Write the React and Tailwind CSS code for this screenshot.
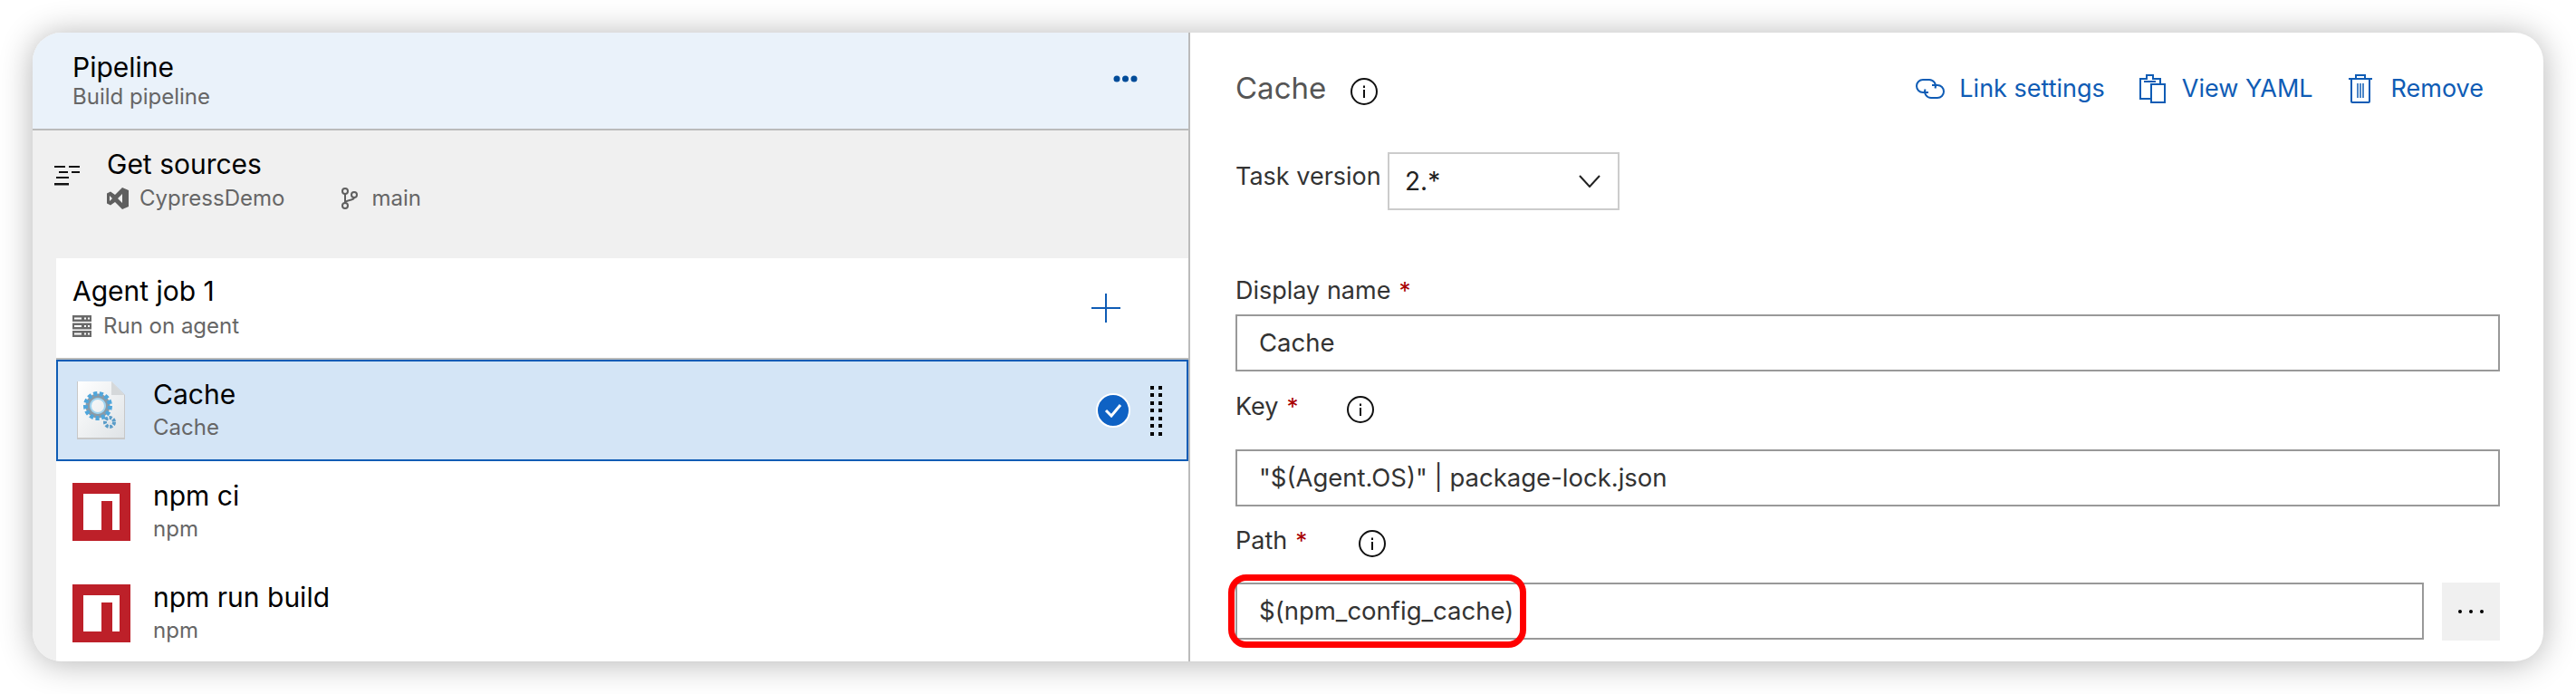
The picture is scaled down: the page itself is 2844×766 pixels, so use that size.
const FONT = "font-['Inter','Noto_Sans',sans-serif]"

function InfoIcon({ className = '' }) {
  return (
    <svg width="30" height="30" viewBox="0 0 30 30" className={className} fill="none">
      <circle cx="15" cy="15" r="14" stroke="#111" strokeWidth="2" />
      <rect x="14" y="13" width="2" height="9" fill="#111" />
      <rect x="14" y="8.5" width="2" height="2.5" fill="#111" />
    </svg>
  )
}

function TasksIcon() {
  return (
    <svg width="28" height="22" viewBox="0 0 28 22" fill="#111">
      <rect x="0" y="0" width="12" height="2" />
      <rect x="16" y="0" width="12" height="2" />
      <rect x="5" y="6" width="10" height="2" />
      <rect x="19" y="6" width="9" height="2" />
      <rect x="2" y="12" width="14" height="2" />
      <rect x="0" y="19" width="16" height="2.5" />
    </svg>
  )
}

function VsIcon() {
  return (
    <svg width="24" height="24" viewBox="0 0 24 24" fill="#5f5f5f">
      <path d="M17 0 24 3v18l-7 3-8-8-5 3.5L0 17.5v-11L4 4.5 9 8zM3 9v6l3-3zm14-2-5 5 5 5z" />
    </svg>
  )
}

function BranchIcon() {
  return (
    <svg width="20" height="24" viewBox="0 0 20 24" fill="none" stroke="#5f5f5f" strokeWidth="2">
      <circle cx="5" cy="4" r="3" />
      <circle cx="5" cy="20" r="3" />
      <circle cx="15" cy="8" r="3" />
      <path d="M5 7v10M15 11c0 4-10 2-10 6" />
    </svg>
  )
}

function ServerIcon() {
  return (
    <svg width="21" height="24" viewBox="0 0 21 24">
      <rect width="21" height="24" fill="#6a6a6a" />
      <rect y="7" width="21" height="1.5" fill="#fff" />
      <rect y="15.5" width="21" height="1.5" fill="#fff" />
      <rect x="2" y="2.5" width="8" height="2" fill="#fff" />
      <rect x="13" y="2.5" width="2" height="2" fill="#fff" />
      <rect x="17" y="2.5" width="2" height="2" fill="#fff" />
      <rect x="2" y="11" width="8" height="2" fill="#fff" />
      <rect x="13" y="11" width="2" height="2" fill="#fff" />
      <rect x="17" y="11" width="2" height="2" fill="#fff" />
      <rect x="2" y="19.5" width="8" height="2" fill="#fff" />
      <rect x="13" y="19.5" width="2" height="2" fill="#fff" />
      <rect x="17" y="19.5" width="2" height="2" fill="#fff" />
    </svg>
  )
}

function CacheIcon() {
  return (
    <svg width="54" height="64" viewBox="0 0 54 64">
      <defs>
        <linearGradient id="page" x1="0" y1="0" x2="1" y2="1">
          <stop offset="0" stopColor="#ffffff" />
          <stop offset="1" stopColor="#dfe3e6" />
        </linearGradient>
      </defs>
      <path d="M0 0h38l15 15v49H0z" fill="#c8c8c8" />
      <path d="M1 0h37l14 15v47H1z" fill="url(#page)" />
      <path d="M38 0v15h14z" fill="#d5d8da" />
      <circle cx="23" cy="27" r="11" fill="none" stroke="#8a9aa6" strokeWidth="5" />
      <circle cx="23" cy="27" r="13.5" fill="none" stroke="#4fa6dc" strokeWidth="5" strokeDasharray="4 2.5" />
      <circle cx="23" cy="27" r="8" fill="none" stroke="#9fd4f0" strokeWidth="2" />
      <circle cx="36" cy="45" r="5" fill="none" stroke="#5a9cc8" strokeWidth="4" strokeDasharray="3 1.5" />
      <circle cx="36" cy="46" r="2" fill="#dfe3e6" />
    </svg>
  )
}

function NpmIcon() {
  return (
    <svg width="64" height="64" viewBox="0 0 64 64" className="shrink-0">
      <rect width="64" height="64" fill="#bd2029" />
      <rect x="12" y="12" width="40" height="40" fill="#fff" />
      <rect x="32" y="20" width="12" height="32" fill="#bd2029" />
    </svg>
  )
}

function PlusIcon() {
  return (
    <svg width="32" height="32" viewBox="0 0 32 32" fill="#0f5cb5">
      <rect x="15" y="0" width="2" height="32" />
      <rect x="0" y="15" width="32" height="2" />
    </svg>
  )
}

function LinkIcon() {
  return (
    <svg width="32" height="22" viewBox="0 0 32 22" fill="none" stroke="#0f5cb5" strokeWidth="2">
      <path d="M14 15H8A7 7 0 0 1 8 1h7a7 7 0 0 1 6.5 9.5" />
      <path d="M18 7h6a7 7 0 0 1 0 14h-7a7 7 0 0 1-6.5-9.5" />
    </svg>
  )
}

function ClipboardIcon() {
  return (
    <svg width="29" height="32" viewBox="0 0 29 32" fill="none" stroke="#0f5cb5" strokeWidth="2">
      <path d="M12 27H1V5h7V1h7v4h8v6" />
      <rect x="13" y="11" width="15" height="20" />
      <path d="M5 8h13" />
    </svg>
  )
}

function TrashIcon() {
  return (
    <svg width="26" height="32" viewBox="0 0 26 32" fill="none" stroke="#0f5cb5" strokeWidth="2">
      <path d="M0 5h26M8 5V1h10v4M3 5v25a1 1 0 0 0 1 1h18a1 1 0 0 0 1-1V5" />
      <path d="M10 10v16M13 10v16M16 10v16" strokeWidth="1.5" />
    </svg>
  )
}

function Gripper() {
  return (
    <div className="grid grid-cols-2 gap-x-[5px] gap-y-[4.5px]">
      {Array.from({ length: 14 }).map((_, i) => (
        <span key={i} className="w-[4px] h-[4px] bg-black" />
      ))}
    </div>
  )
}

function TaskRow({ icon, title, sub, selected }) {
  return (
    <div
      className={
        selected
          ? 'h-[112px] shrink-0 flex items-center border-2 border-[#0f5cb5] bg-[#d4e5f6] pl-[21px] pr-[27px]'
          : 'h-[112px] shrink-0 flex items-center pl-[18px] pr-[29px]'
      }
    >
      <div className={selected ? 'w-[84px]' : 'w-[89px]'}>{icon}</div>
      <div className="flex-1 mb-[2px]">
        <div className="text-[30px] leading-[36px] text-black">{title}</div>
        <div className="text-[24px] leading-[30px] mt-[4px] text-[#666]">{sub}</div>
      </div>
      {selected && (
        <div className="flex items-center gap-[22px]">
          <span className="w-[38px] h-[38px] rounded-full bg-[#0f62c4] border-2 border-white flex items-center justify-center">
            <svg width="20" height="16" viewBox="0 0 20 16" fill="none" stroke="#fff" strokeWidth="3">
              <path d="M2 8l6 6L18 2" />
            </svg>
          </span>
          <Gripper />
        </div>
      )}
    </div>
  )
}

function Label({ text, infoClass }) {
  return (
    <div className="flex items-center h-[34px] text-[27px] leading-[34px] text-[#333]">
      <span>{text}</span>
      <span className="text-[#a80000] text-[26px] ml-[9px]">*</span>
      {infoClass && <InfoIcon className={infoClass} />}
    </div>
  )
}

function TextBox({ children, className = '' }) {
  return (
    <div className={`h-[63px] border-2 border-[#999] flex items-center pl-[24px] text-[27.5px] text-[#333] ${className}`}>
      {children}
    </div>
  )
}

export default function App() {
  return (
    <div className={`w-[2844px] h-[766px] bg-white overflow-hidden p-[36px] ${FONT}`}>
      <div className="w-[2772px] h-[694px] flex rounded-[32px] overflow-hidden bg-white shadow-[0_2px_36px_rgba(0,0,0,0.3)]">
        {/* Left: pipeline tree */}
        <div className="w-[1276px] shrink-0 flex flex-col bg-[#f0f0f0]">
          <div className="h-[108px] shrink-0 bg-[#eaf2fa] border-b-2 border-[#bbb] pl-[44px] pr-[56px] flex items-center justify-between">
            <div>
              <div className="text-[30px] leading-[36px] text-black">Pipeline</div>
              <div className="text-[24px] leading-[30px] text-[#666]">Build pipeline</div>
            </div>
            <svg width="27" height="8" viewBox="0 0 27 8" fill="#004c99" className="mb-[4px]">
              <circle cx="4" cy="4" r="3.5" />
              <circle cx="13.5" cy="4" r="3.5" />
              <circle cx="23" cy="4" r="3.5" />
            </svg>
          </div>
          <div className="h-[141px] shrink-0 flex items-start pl-[24px] pt-[19px]">
            <div className="mt-[20px] mr-[30px]">
              <TasksIcon />
            </div>
            <div>
              <div className="text-[30px] leading-[36px] text-black">Get sources</div>
              <div className="flex items-center mt-[5px] text-[24px] leading-[30px] text-[#666]">
                <VsIcon />
                <span className="ml-[12px]">CypressDemo</span>
                <span className="ml-[62px]"><BranchIcon /></span>
                <span className="ml-[14px]">main</span>
              </div>
            </div>
          </div>
          <div className="flex-1 ml-[26px] bg-white flex flex-col overflow-hidden">
            <div className="h-[112px] shrink-0 border-b-2 border-[#bbb] pl-[18px] pr-[75px] flex items-center justify-between">
              <div className="mb-[2px]">
                <div className="text-[30px] leading-[36px] text-black">Agent job 1</div>
                <div className="flex items-center gap-[13px] mt-[6px] text-[24px] leading-[30px] text-[#666]">
                  <ServerIcon />
                  Run on agent
                </div>
              </div>
              <PlusIcon />
            </div>
            <TaskRow icon={<CacheIcon />} title="Cache" sub="Cache" selected />
            <TaskRow icon={<NpmIcon />} title="npm ci" sub="npm" />
            <TaskRow icon={<NpmIcon />} title="npm run build" sub="npm" />
          </div>
        </div>

        {/* Right: task settings */}
        <div className="flex-1 border-l-2 border-[#bbb] pl-[50px] pr-[48px] pt-[34px] overflow-hidden">
          <div className="h-[56px] flex items-center justify-between pr-[18px]">
            <div className="flex items-center gap-[27px]">
              <span className="text-[33px] text-[#555]">Cache</span>
              <InfoIcon className="mt-[6px]" />
            </div>
            <div className="flex items-center text-[27px] text-[#0f5cb5]">
              <LinkIcon />
              <span className="ml-[16px]">Link settings</span>
              <span className="ml-[38px]"><ClipboardIcon /></span>
              <span className="ml-[18px]">View YAML</span>
              <span className="ml-[39px]"><TrashIcon /></span>
              <span className="ml-[21px]">Remove</span>
            </div>
          </div>

          <div className="flex items-center mt-[42px]">
            <span className="text-[27px] text-[#333] w-[168px] mb-[10px]">Task version</span>
            <div className="w-[256px] h-[64px] border-2 border-[#ccc] flex items-center justify-between pl-[17px] pr-[19px] text-[28px] text-[#222]">
              2.*
              <svg width="24" height="14" viewBox="0 0 24 14" fill="none" stroke="#222" strokeWidth="2">
                <path d="M1 1l11 12L23 1" />
              </svg>
            </div>
          </div>

          <div className="mt-[72px]">
            <Label text="Display name" />
          </div>
          <TextBox className="mt-[9px]">Cache</TextBox>

          <div className="mt-[22px]">
            <Label text="Key" infoClass="ml-[53px] mt-[6px]" />
          </div>
          <TextBox className="mt-[30px]">"$(Agent.OS)" | package-lock.json</TextBox>

          <div className="mt-[21px]">
            <Label text="Path" infoClass="ml-[57px] mt-[6px]" />
          </div>
          <div className="flex gap-[20px] mt-[29px]">
            <div className="relative flex-1">
              <TextBox>$(npm_config_cache)</TextBox>
              <div className="absolute left-[-8px] top-[-9px] w-[329px] h-[81px] border-[7px] border-[#f00] rounded-[20px]" />
            </div>
            <div className="w-[64px] h-[64px] shrink-0 bg-[#f0f0f0] flex items-center justify-center gap-[8px]">
              <span className="w-[4px] h-[4px] rounded-full bg-black" />
              <span className="w-[4px] h-[4px] rounded-full bg-black" />
              <span className="w-[4px] h-[4px] rounded-full bg-black" />
            </div>
          </div>
        </div>
      </div>
    </div>
  )
}
